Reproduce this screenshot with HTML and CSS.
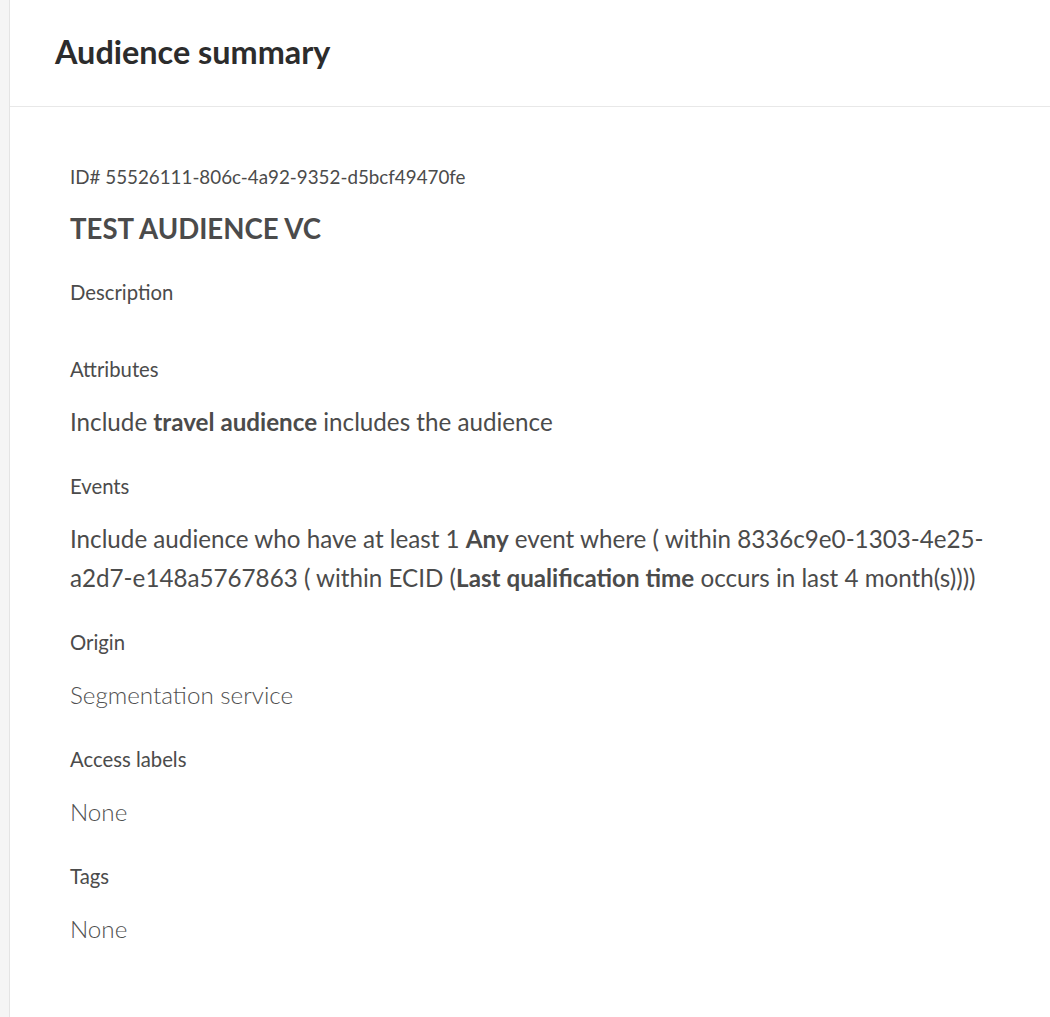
FILE: index.html
```html
<!DOCTYPE html>
<html lang="en">
<head>
<meta charset="utf-8">
<title>Audience summary</title>
<link rel="stylesheet" href="styles.css">
</head>
<body>
<div class="layout">
  <div class="rail"></div>
  <main class="panel">
    <header class="panel-header">
      <h1 class="panel-title">Audience summary</h1>
    </header>
    <section class="summary">
      <div class="audience-id">ID# 55526111-806c-4a92-9352-d5bcf49470fe</div>
      <h2 class="audience-name">TEST AUDIENCE VC</h2>
      <div class="field field-empty">
        <div class="field-label">Description</div>
      </div>
      <div class="field">
        <div class="field-label">Attributes</div>
        <div class="field-value">Include <b>travel audience</b> includes the audience</div>
      </div>
      <div class="field">
        <div class="field-label">Events</div>
        <div class="field-value">Include audience who have at least 1 <b>Any</b> event where ( within 8336c9e0-1303-4e25-a2d7-e148a5767863 ( within ECID (<b>Last qualification time</b> occurs in last 4 month(s))))</div>
      </div>
      <div class="field">
        <div class="field-label">Origin</div>
        <div class="field-value light">Segmentation service</div>
      </div>
      <div class="field">
        <div class="field-label">Access labels</div>
        <div class="field-value light">None</div>
      </div>
      <div class="field">
        <div class="field-label">Tags</div>
        <div class="field-value light">None</div>
      </div>
    </section>
  </main>
</div>
</body>
</html>
```

FILE: styles.css
```css
html, body {
  margin: 0;
  padding: 0;
  background: #ffffff;
}

body {
  font-family: "Lato", "Open Sans", sans-serif;
  color: #4b4b4b;
}

.layout {
  display: flex;
  min-height: 1017px;
}

.rail {
  width: 9px;
  flex: 0 0 9px;
  background: #f5f5f5;
  border-right: 1px solid #e4e4e4;
}

.panel {
  flex: 1;
  min-width: 0;
}

.panel-header {
  height: 107px;
  box-sizing: border-box;
  border-bottom: 1px solid #e8e8e8;
  display: flex;
  align-items: center;
  padding: 0 0 2px 45px;
}

.panel-title {
  margin: 0;
  font-size: 32.4px;
  line-height: 40px;
  font-weight: 700;
  color: #2c2c2c;
}

.summary {
  padding: 57px 60px 0 60px;
  display: flex;
  flex-direction: column;
}

.audience-id {
  font-size: 18.8px;
  line-height: 26px;
  color: #4b4b4b;
}

.audience-name {
  margin: 21px 0 0 0;
  font-size: 27.6px;
  line-height: 36px;
  font-weight: 700;
  color: #4b4b4b;
}

.field {
  margin-top: 32px;
}

.field-empty {
  padding-bottom: 19px;
}

.field-label {
  font-size: 20.3px;
  line-height: 26px;
  color: #4b4b4b;
}

.field-value {
  margin-top: 20px;
  font-size: 24.2px;
  line-height: 39px;
  color: #4b4b4b;
}

.field-value b {
  font-weight: 700;
}

.field-value.light {
  font-weight: 300;
  color: #505050;
}
```
